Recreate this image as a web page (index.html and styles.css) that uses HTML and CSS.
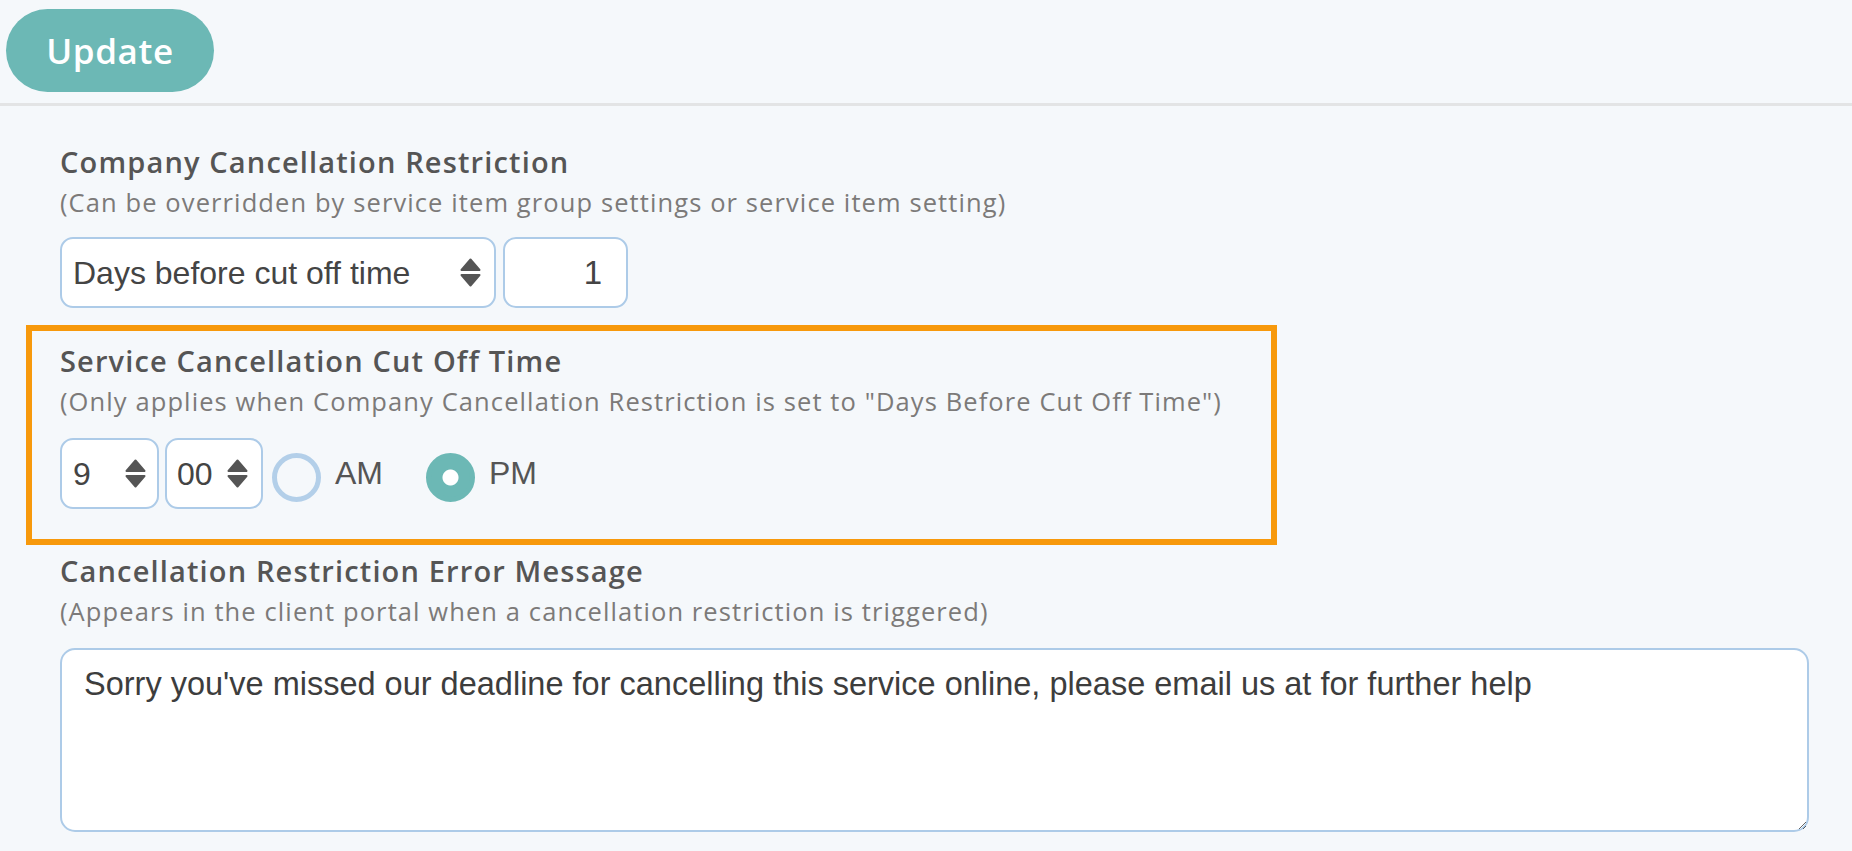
FILE: index.html
```html
<!DOCTYPE html>
<html lang="en">
<head>
<meta charset="utf-8">
<title>Cancellation Settings</title>
<link rel="stylesheet" href="styles.css">
</head>
<body>
<header class="topbar">
  <button class="btn-update" type="button">Update</button>
</header>
<main class="content">
  <section class="field">
    <h2 class="field-title">Company Cancellation Restriction</h2>
    <p class="field-hint">(Can be overridden by service item group settings or service item setting)</p>
    <div class="controls">
      <div class="select-wrap select-wide">
        <select class="select"><option>Days before cut off time</option></select>
        <svg class="sort-icon" viewBox="0 0 21 29" aria-hidden="true"><polygon points="10.5,1.5 19.5,12 1.5,12"/><polygon points="1.5,17 19.5,17 10.5,27.5"/></svg>
      </div>
      <input class="num-input" type="text" value="1">
    </div>
  </section>

  <section class="field field-highlight">
    <h2 class="field-title">Service Cancellation Cut Off Time</h2>
    <p class="field-hint">(Only applies when Company Cancellation Restriction is set to "Days Before Cut Off Time")</p>
    <div class="controls">
      <div class="select-wrap select-hour">
        <select class="select"><option>9</option></select>
        <svg class="sort-icon" viewBox="0 0 21 29" aria-hidden="true"><polygon points="10.5,1.5 19.5,12 1.5,12"/><polygon points="1.5,17 19.5,17 10.5,27.5"/></svg>
      </div>
      <div class="select-wrap select-minute">
        <select class="select"><option>00</option></select>
        <svg class="sort-icon" viewBox="0 0 21 29" aria-hidden="true"><polygon points="10.5,1.5 19.5,12 1.5,12"/><polygon points="1.5,17 19.5,17 10.5,27.5"/></svg>
      </div>
      <label class="radio-option radio-am"><input class="radio" type="radio" name="ampm"><span class="radio-label">AM</span></label>
      <label class="radio-option radio-pm"><input class="radio" type="radio" name="ampm" checked><span class="radio-label">PM</span></label>
    </div>
  </section>

  <section class="field field-last">
    <h2 class="field-title">Cancellation Restriction Error Message</h2>
    <p class="field-hint">(Appears in the client portal when a cancellation restriction is triggered)</p>
    <textarea class="message">Sorry you've missed our deadline for cancelling this service online, please email us at for further help</textarea>
  </section>
</main>
</body>
</html>
```
FILE: styles.css
```css
* { box-sizing: border-box; }

html, body {
  margin: 0;
  padding: 0;
  background: #f5f8fb;
}

body {
  font-family: "Open Sans", "Liberation Sans", sans-serif;
  color: #555;
}

.topbar {
  height: 106px;
  padding: 9px 0 0 6px;
  border-bottom: 3px solid #e3e4e5;
}

.btn-update {
  width: 208px;
  height: 83px;
  border: none;
  border-radius: 42px;
  background: #6cb8b5;
  color: #fff;
  font-family: "Open Sans", sans-serif;
  font-weight: 600;
  font-size: 35px;
  letter-spacing: 0.6px;
  padding: 0 0 1px 0;
  cursor: pointer;
}

.content {
  padding-left: 26px;
}

.field {
  padding-left: 34px;
}

.field:first-child {
  margin-top: 38px;
}

.field-title {
  margin: 0;
  font-size: 29px;
  line-height: 36px;
  font-weight: 600;
  letter-spacing: 1.15px;
  color: #555;
}

.field-hint {
  margin: 5px 0 0 0;
  font-size: 25.5px;
  line-height: 34px;
  font-weight: 400;
  letter-spacing: 1.1px;
  color: #7c7a79;
}

.controls {
  margin-top: 18px;
  display: flex;
  align-items: center;
  height: 71px;
}

.field-highlight .controls {
  margin-top: 20px;
}

.select-wrap {
  position: relative;
  height: 71px;
}

.select {
  appearance: none;
  -webkit-appearance: none;
  width: 100%;
  height: 100%;
  border: 2px solid #adcbe8;
  border-radius: 13px;
  background: #fff;
  font-family: "Liberation Sans", Arial, sans-serif;
  font-size: 32px;
  color: #444;
  padding: 0 0 0 11px;
  margin: 0;
}

.sort-icon {
  position: absolute;
  top: 21px;
  right: 15px;
  width: 21px;
  height: 29px;
  fill: #555;
  stroke: #555;
  stroke-width: 2;
  stroke-linejoin: round;
  pointer-events: none;
}

.select-wide { width: 436px; }

.num-input {
  width: 125px;
  height: 71px;
  margin-left: 7px;
  border: 2px solid #adcbe8;
  border-radius: 13px;
  background: #fff;
  font-family: "Liberation Sans", Arial, sans-serif;
  font-size: 33px;
  color: #444;
  text-align: right;
  padding: 0 24px 0 0;
}

.select-hour { width: 99px; }
.select-hour .select { padding-left: 11px; }
.select-hour .sort-icon { right: 13px; }

.select-minute { width: 98px; margin-left: 6px; }
.select-minute .select { padding-left: 10px; }

.radio-option {
  display: flex;
  align-items: center;
  font-family: "Liberation Sans", Arial, sans-serif;
  font-size: 32px;
  color: #555;
}

.radio-am { margin-left: 9px; }
.radio-pm { margin-left: 43px; }

.radio {
  appearance: none;
  -webkit-appearance: none;
  width: 49px;
  height: 49px;
  margin: 7px 0 0 0;
  border-radius: 50%;
  border: 5px solid #b3cfe9;
  background: transparent;
}

.radio:checked {
  border-color: #6cb8b5;
  background: radial-gradient(circle, #fff 0, #fff 7.5px, #6cb8b5 8.5px);
}

.radio-label {
  margin-left: 14px;
}

.field-highlight {
  width: 1251px;
  margin-top: 17px;
  border: 6px solid #f7990c;
  padding: 12px 0 30px 28px;
}

.field-last {
  margin-top: 8px;
}

.message {
  display: block;
  width: 1749px;
  height: 184px;
  margin-top: 20px;
  border: 2px solid #adcbe8;
  border-radius: 15px;
  background: #fff;
  font-family: "Liberation Sans", Arial, sans-serif;
  font-size: 32.5px;
  color: #3d3d3d;
  padding: 16px 22px;
  resize: both;
}
```
